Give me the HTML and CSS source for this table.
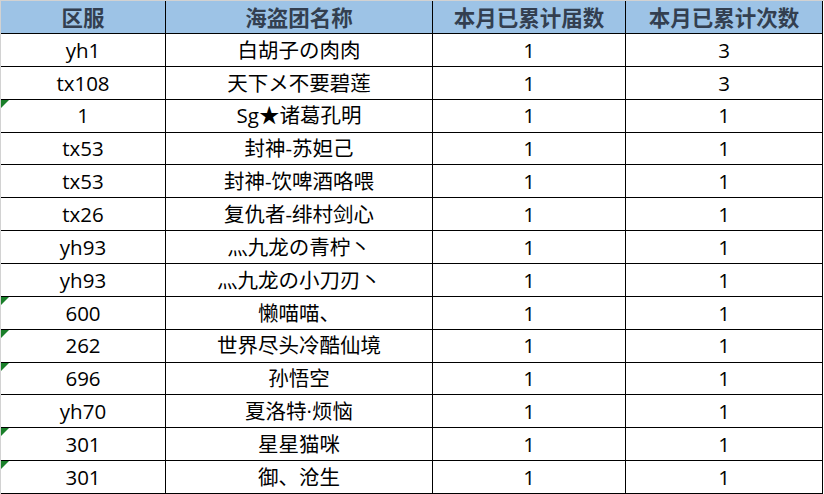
FILE: index.html
```html
<!DOCTYPE html>
<html lang="zh">
<head>
<meta charset="utf-8">
<link rel="stylesheet" href="styles.css">
</head>
<body>
<div class="page">
  <div class="sheet">
    <div class="cell head">区服</div>
    <div class="cell head">海盗团名称</div>
    <div class="cell head">本月已累计届数</div>
    <div class="cell head">本月已累计次数</div>

    <div class="cell">yh1</div><div class="cell">白胡子の肉肉</div><div class="cell">1</div><div class="cell">3</div>
    <div class="cell">tx108</div><div class="cell">天下メ不要碧莲</div><div class="cell">1</div><div class="cell">3</div>
    <div class="cell flag">1</div><div class="cell">Sg★诸葛孔明</div><div class="cell">1</div><div class="cell">1</div>
    <div class="cell">tx53</div><div class="cell">封神-苏妲己</div><div class="cell">1</div><div class="cell">1</div>
    <div class="cell">tx53</div><div class="cell">封神-饮啤酒咯喂</div><div class="cell">1</div><div class="cell">1</div>
    <div class="cell">tx26</div><div class="cell">复仇者-绯村剑心</div><div class="cell">1</div><div class="cell">1</div>
    <div class="cell">yh93</div><div class="cell">灬九龙の青柠丶</div><div class="cell">1</div><div class="cell">1</div>
    <div class="cell">yh93</div><div class="cell">灬九龙の小刀刃丶</div><div class="cell">1</div><div class="cell">1</div>
    <div class="cell flag">600</div><div class="cell">懒喵喵、</div><div class="cell">1</div><div class="cell">1</div>
    <div class="cell flag">262</div><div class="cell">世界尽头冷酷仙境</div><div class="cell">1</div><div class="cell">1</div>
    <div class="cell flag">696</div><div class="cell">孙悟空</div><div class="cell">1</div><div class="cell">1</div>
    <div class="cell">yh70</div><div class="cell">夏洛特·烦恼</div><div class="cell">1</div><div class="cell">1</div>
    <div class="cell flag">301</div><div class="cell">星星猫咪</div><div class="cell">1</div><div class="cell">1</div>
    <div class="cell flag">301</div><div class="cell">御、沧生</div><div class="cell">1</div><div class="cell">1</div>
  </div>
</div>
</body>
</html>
```
FILE: styles.css
```css
html, body {
  margin: 0;
  padding: 0;
  background: #ffffff;
}
.page {
  width: 824px;
  height: 494px;
  box-sizing: border-box;
  border-top: 1px solid #d2d2d2;
  border-left: 1px solid #d2d2d2;
  overflow: hidden;
}
.sheet {
  width: 822px;
  height: 493px;
  box-sizing: border-box;
  display: grid;
  grid-template-columns: 164px 266px 192px 196px;
  grid-template-rows: 32px repeat(14, 1fr);
  gap: 1px;
  background: #000000;
  border-right: 1px solid #000000;
  border-bottom: 1px solid #000000;
}
.cell {
  position: relative;
  background: #ffffff;
  display: flex;
  align-items: center;
  justify-content: center;
  font-family: "Open Sans", "Noto Sans CJK SC", sans-serif;
  font-size: 20.5px;
  color: #000000;
  line-height: 1;
  white-space: nowrap;
}
.head {
  background: #9dc3e6;
  color: #333f50;
  font-family: "Noto Sans CJK SC", sans-serif;
  font-weight: 700;
  font-size: 21.5px;
}
.flag::before {
  content: "";
  position: absolute;
  left: 0;
  top: 0;
  width: 0;
  height: 0;
  border-top: 8px solid #1a7f2a;
  border-right: 8px solid transparent;
}
```
